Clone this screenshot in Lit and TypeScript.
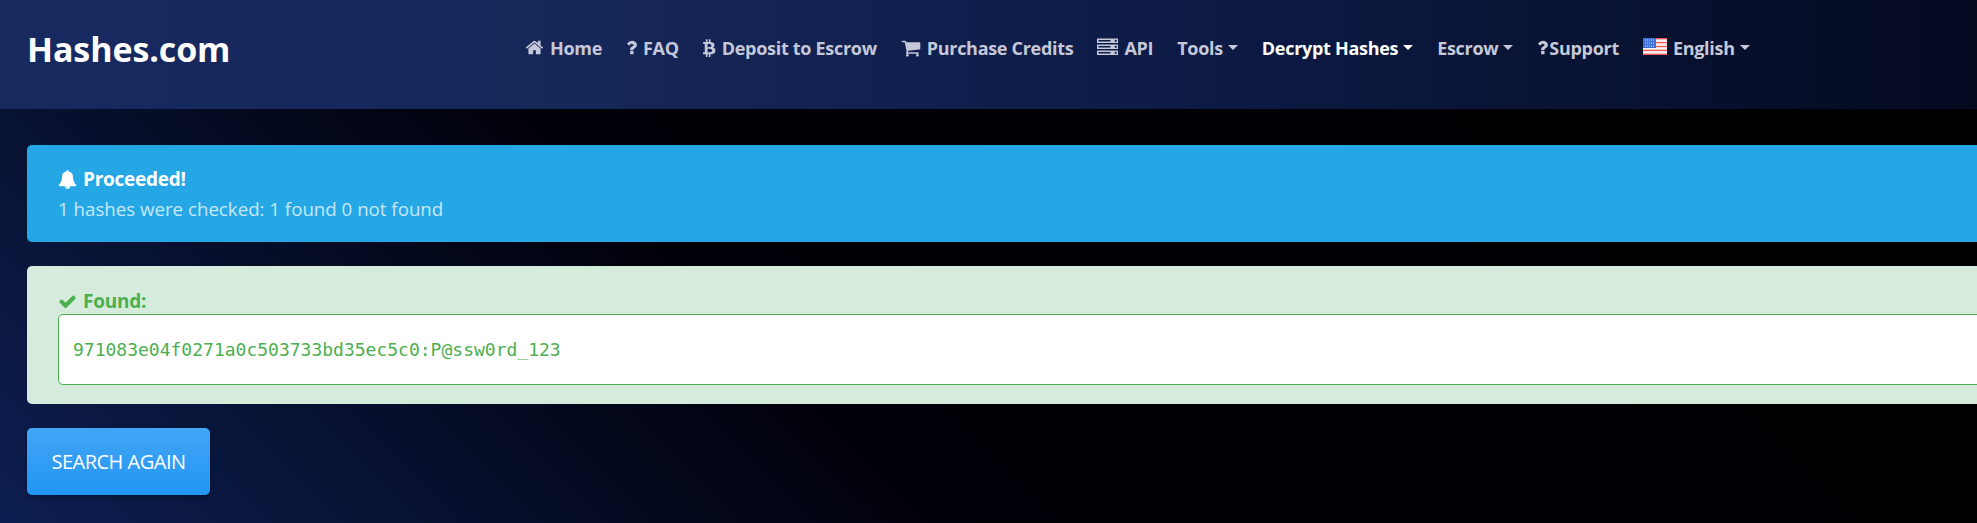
import { LitElement, html, css, svg } from "lit";
import { customElement } from "lit/decorators.js";

const ICONS: Record<string, string> = {
  home: "M1472 992v480q0 26-19 45t-45 19h-384v-384h-256v384h-384q-26 0-45-19t-19-45v-480q0-1 .5-3t.5-3l575-474 575 474q1 2 1 6zm223-69l-62 74q-8 9-21 11h-3q-13 0-21-7l-692-577-692 577q-12 8-24 7-13-2-21-11l-62-74q-8-10-7-23.5t11-21.5l719-599q32-26 76-26t76 26l244 204v-195q0-14 9-23t23-9h192q14 0 23 9t9 23v408l219 182q10 8 11 21.5t-7 23.5z",
  question: "M1088 1256v240q0 16-12 28t-28 12h-240q-16 0-28-12t-12-28v-240q0-16 12-28t28-12h240q16 0 28 12t12 28zm316-600q0 54-15.5 101t-35 76.5-55 59.5-57.5 43.5-61 35.5q-41 23-68.5 65t-27.5 67q0 17-12 32.5t-28 15.5h-240q-15 0-25.5-18.5t-10.5-37.5v-45q0-83 65-156.5t143-108.5q59-27 84-56t25-76q0-42-46.5-74t-107.5-32q-65 0-108 29-35 25-107 115-13 16-31 16-12 0-25-8l-164-125q-13-10-15.5-25t5.5-28q160-266 464-266 80 0 161 31t146 83 106 127.5 41 158.5z",
  bitcoin: "M1167 640q18 182-131 258 117 28 175 103t45 214q-7 71-32.5 125t-64.5 89-97 58.5-121.5 34.5-145.5 15v255h-154v-251q-80 0-122-1v252h-154v-255q-18 0-54-.5t-55-.5h-200l31-183h111q50 0 58-51v-402h16q-6-1-16-1v-287q-13-68-89-68h-111v-164l212 1q64 0 97-1v-252h154v247q82-2 122-2v-245h154v252q79 7 140 22.5t113 45 82.5 78 36.5 114.5zm-215 545q0-36-15-64t-37-46-57.5-30.5-65.5-18.5-74-9-69-3-64.5 1-47.5 1v338q8 0 37 .5t48 .5 53-1.5 58.5-4 57-8.5 55.5-14 47.5-21 39.5-30 24.5-40 9.5-51zm-71-476q0-33-12.5-58.5t-30.5-42-48-28-55-16.5-61.5-8-58-2.5-54 1-39.5.5v307q5 0 34.5.5t46.5 0 50-2 55-5.5 51.5-11 48.5-18.5 37-27 27-38.5 9-51z",
  cart: "M704 1536q0 52-38 90t-90 38-90-38-38-90 38-90 90-38 90 38 38 90zm896 0q0 52-38 90t-90 38-90-38-38-90 38-90 90-38 90 38 38 90zm128-1088v512q0 24-16.5 42.5t-40.5 21.5l-1044 122q13 60 13 70 0 16-24 64h920q26 0 45 19t19 45-19 45-45 19h-1024q-26 0-45-19t-19-45q0-11 8-31.5t16-36 21.5-40 15.5-29.5l-177-823h-204q-26 0-45-19t-19-45 19-45 45-19h256q16 0 28.5 6.5t19.5 15.5 13 24.5 8 26 5.5 29.5 4.5 26h1201q26 0 45 19t19 45z",
  server: "M128 1408h1024v-128h-1024v128zm0-512h1024v-128h-1024v128zm1568 448q0-40-28-68t-68-28-68 28-28 68 28 68 68 28 68-28 28-68zm-1568-960h1024v-128h-1024v128zm1568 448q0-40-28-68t-68-28-68 28-28 68 28 68 68 28 68-28 28-68zm0-512q0-40-28-68t-68-28-68 28-28 68 28 68 68 28 68-28 28-68zm96 832v384h-1792v-384h1792zm0-512v384h-1792v-384h1792zm0-512v384h-1792v-384h1792z",
  bell: "M912 1696q0-16-16-16-59 0-101.5-42.5t-42.5-101.5q0-16-16-16t-16 16q0 73 51.5 124.5t124.5 51.5q16 0 16-16zm816-288q0 52-38 90t-90 38h-448q0 106-75 181t-181 75-181-75-75-181h-448q-52 0-90-38t-38-90q50-42 91-88t85-119.5 74.5-158.5 50-206 19.5-260q0-152 117-282.5t307-158.5q-8-19-8-39 0-40 28-68t68-28 68 28 28 68q0 20-8 39 190 28 307 158.5t117 282.5q0 139 19.5 260t50 206 74.5 158.5 85 119.5 91 88z",
  check: "M1671 566q0 40-28 68l-724 724-136 136q-28 28-68 28t-68-28l-136-136-362-362q-28-28-28-68t28-68l136-136q28-28 68-28t68 28l294 295 656-657q28-28 68-28t68 28l136 136q28 28 28 68z",
};

// question and bitcoin glyphs are narrow, so crop their box to the advance width
const BOXES: Record<string, string> = {
  question: "384 0 1024 1792",
  bitcoin: "128 0 1152 1792",
};

const icon = (name: string) =>
  html`<svg class="fa ${name}" viewBox=${BOXES[name] ?? "0 0 1792 1792"}><path fill="currentColor" d=${ICONS[name]}></path></svg>`;

const flag = html`<svg class="flag" viewBox="0 0 24 17">
  ${svg`<rect width="24" height="17" fill="#f4f4f8"></rect>
  <rect y="0" width="24" height="1.4" fill="#ef5a5a"></rect>
  <rect y="3.9" width="24" height="1.4" fill="#ef5a5a"></rect>
  <rect y="7.8" width="24" height="1.4" fill="#ef5a5a"></rect>
  <rect y="11.7" width="24" height="1.4" fill="#ef5a5a"></rect>
  <rect y="15.6" width="24" height="1.4" fill="#ef5a5a"></rect>
  <rect width="13" height="10" fill="#3f6fd8"></rect>
  <path d="M2 2h9M2 5h9M2 8h9" stroke="#cfdcf8" stroke-width="1" stroke-dasharray="1 1"></path>`}
</svg>`;

type NavItem = { label: string; icon?: string; caret?: boolean; active?: boolean; flag?: boolean; tight?: boolean };

const NAV: NavItem[] = [
  { label: "Home", icon: "home" },
  { label: "FAQ", icon: "question" },
  { label: "Deposit to Escrow", icon: "bitcoin" },
  { label: "Purchase Credits", icon: "cart" },
  { label: "API", icon: "server" },
  { label: "Tools", caret: true },
  { label: "Decrypt Hashes", caret: true, active: true },
  { label: "Escrow", caret: true },
  { label: "Support", icon: "question", tight: true },
  { label: "English", caret: true, flag: true },
];

@customElement("app-root")
export class AppRoot extends LitElement {
  static override styles = css`
    :host {
      display: block;
      width: 100%;
      height: 523px;
      overflow: hidden;
      background: linear-gradient(45deg, #0d1f52 0%, #000008 38%, #000 100%);
      font-family: "Open Sans", "Noto Sans", sans-serif;
    }

    header {
      display: flex;
      align-items: center;
      height: 109px;
      padding: 0 0 0 27px;
      box-sizing: border-box;
      background: linear-gradient(90deg, #172a60 0%, #152658 30%, #0c1a44 62%, #040a20 100%);
    }
    .brand {
      width: 498px;
      font-size: 34px;
      font-weight: 700;
      letter-spacing: -0.1px;
      color: #fff;
      padding-bottom: 12px;
    }
    nav {
      display: flex;
      align-items: center;
      gap: 24px;
      padding-bottom: 14px;
    }
    .item {
      display: flex;
      align-items: center;
      gap: 6px;
      font-size: 18px;
      font-weight: 700;
      letter-spacing: -0.3px;
      color: #c5c8d8;
      white-space: nowrap;
    }
    .item.active {
      color: #fff;
    }
    .item.tight {
      gap: 1px;
    }
    .fa {
      width: 19px;
      height: 19px;
      flex: none;
    }
    .fa.question {
      width: 11px;
    }
    .fa.bitcoin {
      width: 13px;
    }
    .fa.cart {
      width: 20px;
      height: 20px;
    }
    .fa.server {
      width: 21px;
      height: 21px;
    }
    .caret {
      width: 0;
      height: 0;
      margin-left: -1px;
      border-left: 5px solid transparent;
      border-right: 5px solid transparent;
      border-top: 5px solid currentColor;
    }
    .flag {
      width: 24px;
      height: 17px;
      flex: none;
      margin-top: -2px;
    }

    main {
      display: flex;
      flex-direction: column;
      align-items: flex-start;
      gap: 24px;
      width: 2100px;
      padding: 36px 0 0 27px;
      box-sizing: border-box;
    }
    .card {
      width: 100%;
      box-sizing: border-box;
      border-radius: 5px;
    }
    .info {
      height: 97px;
      padding: 19px 31px;
      background: #25a7e6;
      color: #c7e7f8;
      font-size: 18.7px;
      line-height: 30px;
    }
    .info strong {
      display: flex;
      align-items: center;
      gap: 6px;
      color: #fff;
      font-size: 19px;
      font-weight: 700;
      letter-spacing: -0.25px;
    }
    .found {
      height: 138px;
      padding: 22px 31px 0;
      background: #d5ecdc;
      color: #4caf50;
    }
    .found strong {
      display: flex;
      align-items: center;
      gap: 6px;
      font-size: 19px;
      line-height: 26px;
      font-weight: 700;
      letter-spacing: -0.25px;
    }
    .hash {
      display: flex;
      align-items: center;
      height: 71px;
      padding: 0 14px;
      box-sizing: border-box;
      background: #fff;
      border: 1px solid #4caf50;
      border-radius: 5px;
      font-family: "DejaVu Sans Mono", monospace;
      font-size: 18px;
    }
    .again {
      width: 183px;
      height: 67px;
      border: none;
      border-radius: 5px;
      color: #fff;
      font: 400 20px "Open Sans", sans-serif;
      letter-spacing: -0.5px;
      background: linear-gradient(180deg, #42a5f5, #2196f3);
      box-shadow: 0 2px 4px rgba(0, 0, 0, 0.35);
    }
  `;

  override render() {
    return html`
      <header>
        <div class="brand">Hashes.com</div>
        <nav>
          ${NAV.map(
            (n) => html`<div class="item ${n.active ? "active" : ""} ${n.tight ? "tight" : ""}">
              ${n.flag ? flag : ""}${n.icon ? icon(n.icon) : ""}
              <span>${n.label}</span>
              ${n.caret ? html`<span class="caret"></span>` : ""}
            </div>`
          )}
        </nav>
      </header>
      <main>
        <section class="card info">
          <strong>${icon("bell")}Proceeded!</strong>
          1 hashes were checked: 1 found 0 not found
        </section>
        <section class="card found">
          <strong>${icon("check")}Found:</strong>
          <div class="hash">971083e04f0271a0c503733bd35ec5c0:P@ssw0rd_123</div>
        </section>
        <button class="again">SEARCH AGAIN</button>
      </main>
    `;
  }
}
